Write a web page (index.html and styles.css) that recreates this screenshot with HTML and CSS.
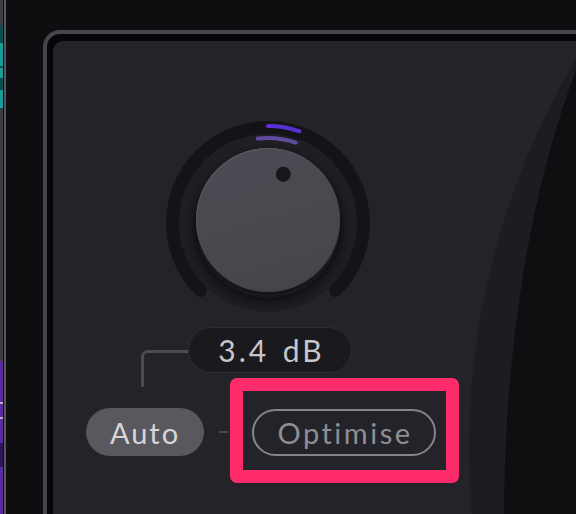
FILE: index.html
```html
<!DOCTYPE html>
<html>
<head>
<meta charset="utf-8">
<link rel="stylesheet" href="styles.css">
</head>
<body>
<div class="app">
  <div class="strip"><div class="strip-colors"></div><div class="strip-line"></div></div>
  <div class="frame">
    <div class="panel">
      <svg class="bigknob" width="200" height="480" viewBox="400 0 200 480">
        <circle cx="1179" cy="408" r="763" fill="#1d1c21"/>
        <ellipse cx="711" cy="479" rx="260" ry="651" fill="#0f0f12"/>
      </svg>
      <div class="controls">
        <svg class="knob" width="204" height="204" viewBox="0 0 204 204">
          <defs>
            <radialGradient id="shade" cx="0.5" cy="0.55" r="0.5">
              <stop offset="0.7" stop-color="#1a191e"/>
              <stop offset="1" stop-color="#1f1e24"/>
            </radialGradient>
            <linearGradient id="disk" x1="0" y1="0" x2="0.3" y2="1">
              <stop offset="0" stop-color="#4d4c53"/>
              <stop offset="1" stop-color="#46454c"/>
            </linearGradient>
            <linearGradient id="rim" x1="0" y1="0" x2="0.6" y2="1">
              <stop offset="0" stop-color="#6a6970"/>
              <stop offset="0.5" stop-color="#48474e"/>
              <stop offset="1" stop-color="#3e3d44"/>
            </linearGradient>
            <filter id="sh" x="-30%" y="-30%" width="160%" height="160%">
              <feDropShadow dx="0" dy="6" stdDeviation="6" flood-color="#0a0a0c" flood-opacity="0.8"/>
            </filter>
          </defs>
          <circle cx="102" cy="102" r="89" fill="url(#shade)"/>
          <path d="M34.5 169.5 A95.5 95.5 0 1 1 169.5 169.5" fill="none" stroke="#141418" stroke-width="13" stroke-linecap="round"/>
          <path d="M102 5 A97 97 0 0 1 133.6 10.3" fill="none" stroke="#5a2fd6" stroke-width="4" stroke-linecap="round"/>
          <path d="M91.6 17.6 A85 85 0 0 1 129.7 21.6" fill="none" stroke="#5f4b9f" stroke-width="4" stroke-linecap="round"/>
          <circle cx="102" cy="99" r="72" fill="url(#disk)" filter="url(#sh)"/>
          <circle cx="102" cy="99" r="71.5" fill="none" stroke="url(#rim)" stroke-width="1"/>
          <circle cx="117.3" cy="53.3" r="7.5" fill="#17171a"/>
        </svg>
        <div class="value-row">
          <div class="connector"></div>
          <div class="value-pill">3.4 dB</div>
        </div>
        <div class="action-row">
          <div class="btn-auto">Auto</div>
          <div class="dash"></div>
          <div class="opt-wrap"><div class="btn-opt">Optimise</div></div>
        </div>
      </div>
    </div>
  </div>
</div>
</body>
</html>
```
FILE: styles.css
```css
html, body {
  margin: 0;
  padding: 0;
  background: #0e0e10;
  overflow: hidden;
}
.app {
  display: flex;
  width: 576px;
  height: 514px;
  overflow: hidden;
  font-family: Lato, "Noto Sans", sans-serif;
}
.strip {
  display: flex;
  width: 6px;
  flex: none;
}
.strip-colors {
  width: 3px;
  margin-right: 1px;
  background: linear-gradient(to bottom,
    #3b3f43 0, #3b3f43 25px,
    #0e4f50 25px, #0e4f50 43px,
    #1c9d9c 43px, #1c9d9c 66px,
    #0e4f50 66px, #0e4f50 68px,
    #1c9d9c 68px, #1c9d9c 78px,
    #0e4f50 78px, #0e4f50 90px,
    #1c9d9c 90px, #1c9d9c 108px,
    #3a3d41 108px, #3a3d41 361px,
    #5b2b9d 361px, #5b2b9d 402px,
    #b9b0cc 402px, #b9b0cc 404px,
    #5b2b9d 404px, #5b2b9d 417px,
    #b9b0cc 417px, #b9b0cc 419px,
    #5b2b9d 419px, #5b2b9d 443px,
    #2d1657 443px, #2d1657 467px,
    #5b2b9d 467px);
}
.strip-line {
  width: 2px;
  background: #55585d;
}
.frame {
  flex: 1;
  margin: 30px 0 0 37px;
  border-top: 4px solid #45464c;
  border-left: 4px solid #45464c;
  border-top-left-radius: 17px;
  background: #060608;
  padding: 7px 0 0 6px;
  display: flex;
}
.panel {
  flex: 1;
  position: relative;
  background: #242329;
  border-top-left-radius: 10px;
  overflow: hidden;
}
.bigknob {
  position: absolute;
  left: 400px;
  top: 0;
}
.controls {
  position: relative;
  display: flex;
  flex-direction: column;
  align-items: flex-start;
  padding: 80px 0 0 33px;
}
.knob {
  display: block;
  margin-left: 80px;
}
.value-row {
  display: flex;
  align-items: flex-start;
  margin: 2px 0 0 55px;
}
.connector {
  width: 44px;
  height: 34px;
  margin-top: 23px;
  border-top: 3px solid #4b4b51;
  border-left: 3px solid #4b4b51;
  border-top-left-radius: 7px;
}
.value-pill {
  box-sizing: border-box;
  width: 164px;
  height: 46px;
  border-radius: 23px;
  background: #1a1a1e;
  border: 1px solid #2d2d32;
  color: #c6c6cc;
  font-size: 30px;
  letter-spacing: 3px;
  word-spacing: 3px;
  padding-left: 3px;
  display: flex;
  align-items: center;
  justify-content: center;
}
.action-row {
  display: flex;
  align-items: center;
  margin-top: 21px;
}
.btn-auto {
  width: 118px;
  height: 48px;
  border-radius: 24px;
  background: #59585f;
  color: #d6d6da;
  font-size: 29px;
  letter-spacing: 2px;
  padding-left: 0;
  display: flex;
  align-items: center;
  justify-content: center;
}
.dash {
  width: 9px;
  height: 2px;
  margin-left: 15px;
  background: #47474d;
}
.opt-wrap {
  position: relative;
  margin-left: 24px;
}
.opt-wrap::after {
  content: "";
  position: absolute;
  top: -31px;
  left: -22px;
  right: -23px;
  bottom: -27px;
  border: 13px solid #ff2c6c;
  border-radius: 7px;
}
.btn-opt {
  box-sizing: border-box;
  width: 184px;
  height: 47px;
  border-radius: 24px;
  border: 2px solid #85858b;
  color: #8e8e94;
  font-size: 29px;
  letter-spacing: 2.5px;
  padding-left: 2px;
  display: flex;
  align-items: center;
  justify-content: center;
}
```
